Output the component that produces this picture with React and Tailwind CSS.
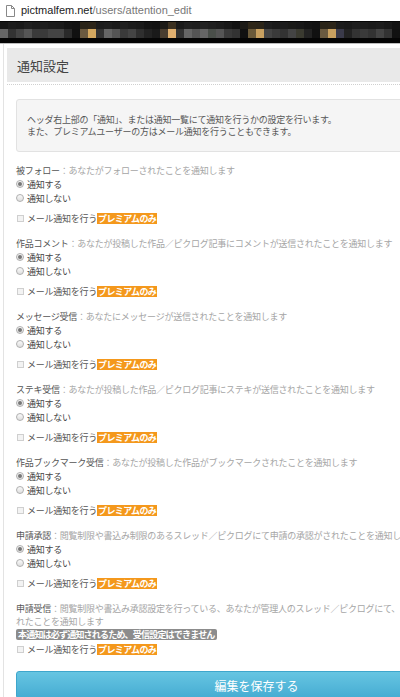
import React from "react";

const topRow = [
  "#161616", "#1c1c1c", "#1a1a1a", "#202020", "#1c1c1c", "#1e1e1e", "#1b1b1b", "#1a1a1a", "#141414", "#121212",
  "#2a2418", "#2c2519", "#1c1c1c", "#1e1e1e", "#1a1a1a", "#202020", "#1c1c1c", "#1a1a1a", "#141414", "#121212",
  "#1c1a16", "#3b3020", "#1a1a1a", "#202020", "#1e1e1e", "#222222", "#1f1f1f", "#1c1c1c", "#181818", "#121212",
  "#1c1a16", "#2e2618", "#2c2519", "#1e1e1e", "#1a1a1a", "#1c1c1c", "#1a1a18", "#181818", "#141414", "#121212",
  "#2a2418", "#2c2519", "#1c1c1c", "#1a1a1a", "#1e1e1e", "#1c1c1c", "#1a1a1a", "#1c1c1c", "#181818", "#121212",
];

const bottomRow = [
  "#666666", "#333333", "#444444", "#555555", "#3a3a3a", "#3a3a3a", "#444444", "#444444", "#2a2a2a", "#111111",
  "#6b5a40", "#d4a860", "#333333", "#666666", "#555555", "#3a3a3a", "#444444", "#2f2f2f", "#222222", "#1a1a1a",
  "#4a3e30", "#e0b070", "#333333", "#666666", "#555555", "#666666", "#4a4f4a", "#555555", "#3a3a3a", "#333333",
  "#111111", "#6b5a3a", "#c8a060", "#444444", "#3a3a3a", "#333333", "#444444", "#3a3a30", "#222222", "#111111",
  "#6a5a40", "#c8a060", "#3a3a4a", "#222222", "#333333", "#3a3a3a", "#333333", "#444444", "#333333", "#111111",
];

const sections = [
  { title: "被フォロー", desc: "：あなたがフォローされたことを通知します" },
  { title: "作品コメント", desc: "：あなたが投稿した作品／ピクログ記事にコメントが送信されたことを通知します" },
  { title: "メッセージ受信", desc: "：あなたにメッセージが送信されたことを通知します" },
  { title: "ステキ受信", desc: "：あなたが投稿した作品／ピクログ記事にステキが送信されたことを通知します" },
  { title: "作品ブックマーク受信", desc: "：あなたが投稿した作品がブックマークされたことを通知します" },
  { title: "申請承認", desc: "：閲覧制限や書込み制限のあるスレッド／ピクログにて申請の承認がされたことを通知します" },
];

function Radio({ checked, label }) {
  return (
    <label className="flex h-[14px] items-center gap-[3px] text-[#444]">
      <span className="flex h-[8px] w-[8px] items-center justify-center rounded-full border border-[#b0b0b0] bg-gradient-to-b from-[#fafafa] to-[#dedede]">
        {checked && <span className="h-[4px] w-[4px] rounded-full bg-[#777]"></span>}
      </span>
      <span>{label}</span>
    </label>
  );
}

function MailRow() {
  return (
    <div className="mt-[6px] flex h-[14px] items-center text-[#555]">
      <span className="ml-[1px] mr-[3px] h-[7px] w-[7px] border border-[#cfcfcf] bg-[#f3f3f3]"></span>
      <span>メール通知を行う</span>
      <span className="h-[11px] bg-[#f4981c] px-[1px] text-[9px] font-bold leading-[11px] tracking-[-0.6px] text-white">
        プレミアムのみ
      </span>
    </div>
  );
}

export default function App() {
  return (
    <div
      className="h-[697px] w-[400px] overflow-hidden bg-white"
      style={{ fontFamily: '"Noto Sans CJK JP", "Noto Sans", sans-serif' }}
    >
      {/* address bar */}
      <div className="flex h-[21px] items-center bg-white pl-[6px]">
        <svg width="9" height="12" viewBox="0 0 9 12" className="mr-[6px]">
          <path d="M0.5 0.5H5.5L8.5 3.5V11.5H0.5Z" fill="#fff" stroke="#888" />
          <path d="M5.5 0.5V3.5H8.5" fill="none" stroke="#888" />
        </svg>
        <span
          className="text-[11px] text-[#222]"
          style={{ fontFamily: '"Liberation Sans", Arial, sans-serif' }}
        >
          pictmalfem.net<span className="text-[#777]">/users/attention_edit</span>
        </span>
      </div>

      {/* blurred bookmarks strip */}
      <svg width="400" height="23" className="block">
        <rect x="0" y="0" width="400" height="23" fill="#050505" />
        {topRow.map((c, i) => (
          <rect key={"t" + i} x={i * 8} y="1" width="8" height="7" fill={c} />
        ))}
        {bottomRow.map((c, i) => (
          <rect key={"b" + i} x={i * 8} y="8" width="8" height="9" fill={c} />
        ))}
        <rect x="0" y="22" width="400" height="1" fill="#bdbdbd" />
      </svg>

      {/* page */}
      <div className="w-[520px] pl-[3px] text-[9px] leading-[13px]">
        <div className="border-l border-[#e3e3e3] pt-[4px] pb-[40px]">
          <div className="ml-[3px] flex h-[34px] items-center bg-[#e9e9e9] pl-[10px] text-[13px] text-[#444]">
            通知設定
          </div>
          <div className="ml-[3px] mt-[2px] border-t border-dotted border-[#d0d0d0]"></div>

          <div className="ml-[12px] pt-[14px] pr-[20px] tracking-[-0.25px]">
            <div className="rounded-[3px] border border-[#e2e2e2] bg-[#f5f5f5] px-[10px] pt-[14px] pb-[13px] leading-[12px] text-[#555]">
              <p>ヘッダ右上部の「通知」、または通知一覧にて通知を行うかの設定を行います。</p>
              <p>また、プレミアムユーザーの方はメール通知を行うこともできます。</p>
            </div>

            <div className="mt-[12px]">
              {sections.map((s) => (
                <div key={s.title} className="mb-[12px]">
                  <div className="whitespace-nowrap">
                    <span className="text-[#555]">{s.title}</span>
                    <span className="text-[#a5a5a5]">{s.desc}</span>
                  </div>
                  <Radio checked label="通知する" />
                  <Radio label="通知しない" />
                  <MailRow />
                </div>
              ))}

              <div>
                <div className="whitespace-nowrap">
                  <span className="text-[#555]">申請受信</span>
                  <span className="text-[#a5a5a5]">
                    ：閲覧制限や書込み承認設定を行っている、あなたが管理人のスレッド／ピクログにて、申請が送信さ
                    <br />
                    れたことを通知します
                  </span>
                </div>
                <div className="mt-[1px] inline-block h-[11px] rounded-[2px] bg-[#8c8c8c] px-[2px] text-[9px] font-bold leading-[11px] tracking-[-0.8px] text-white">
                  本通知は必ず通知されるため、受信設定はできません
                </div>
                <div className="-mt-[5px]">
                  <MailRow />
                </div>
              </div>

              <button className="mt-[15px] flex h-[28px] w-[481px] items-center justify-center rounded-[3px] border border-[#3ea6cc] bg-gradient-to-b from-[#66c5e2] to-[#45acd2] text-[12px] tracking-normal text-white">
                編集を保存する
              </button>
            </div>
          </div>
        </div>
      </div>
    </div>
  );
}
